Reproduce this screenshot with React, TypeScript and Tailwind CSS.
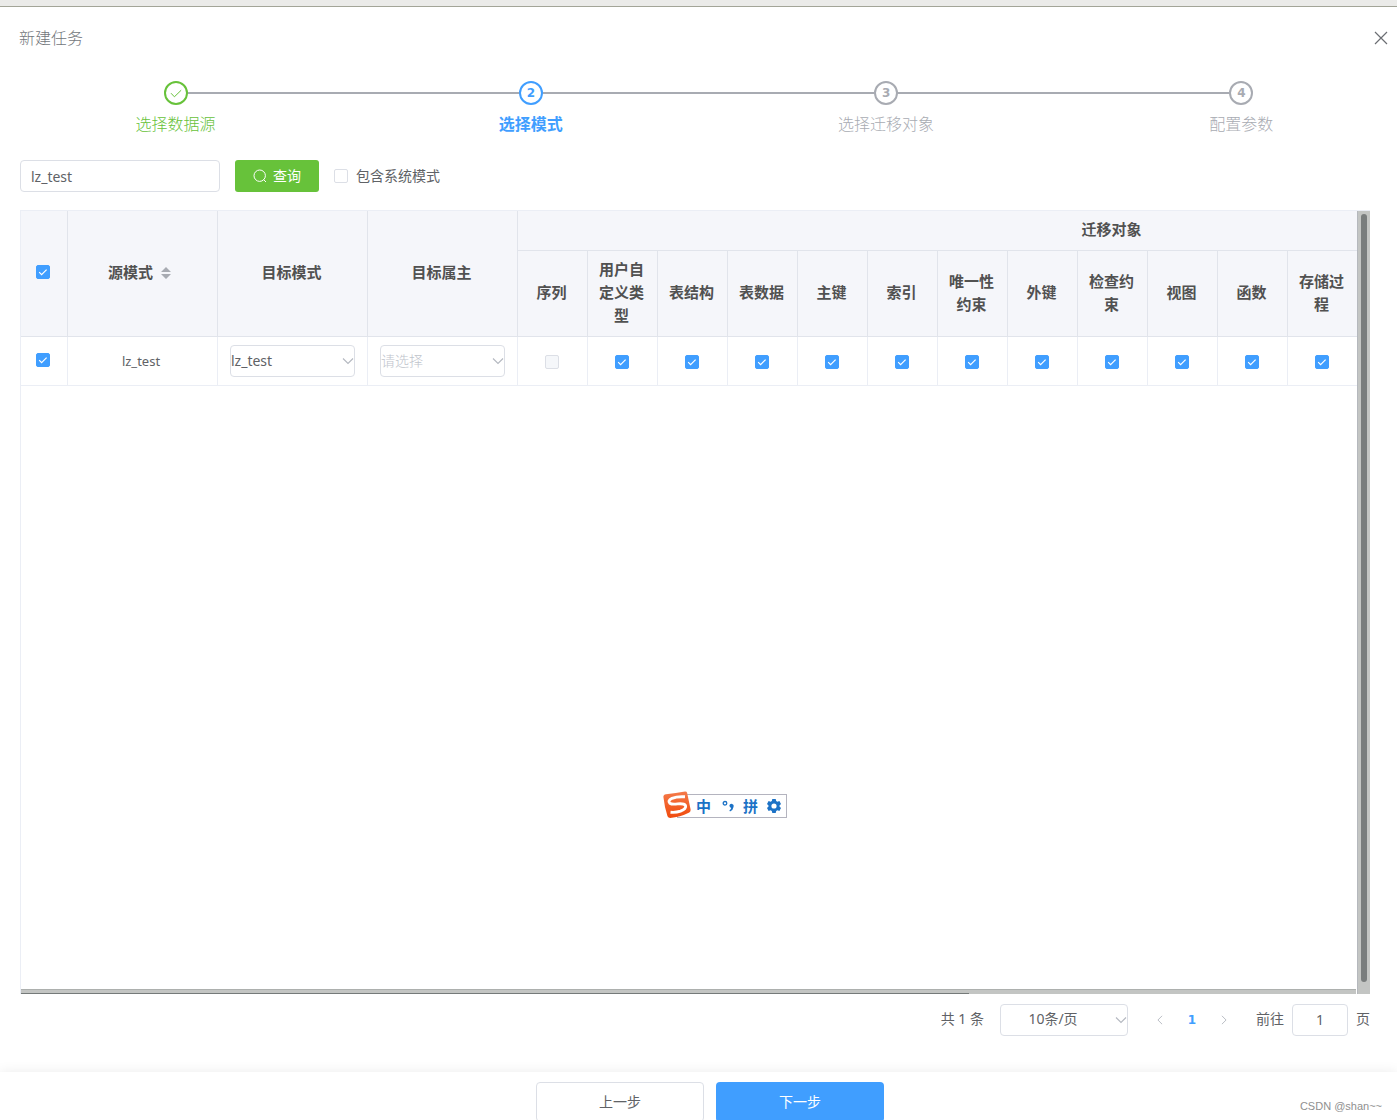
import React, { useState } from "react";

const OBJECT_COLUMNS = [
  "序列",
  "用户自定义类型",
  "表结构",
  "表数据",
  "主键",
  "索引",
  "唯一性约束",
  "外键",
  "检查约束",
  "视图",
  "函数",
  "存储过程",
];
const SPARE_COLUMNS = 5;

function Checkbox({ label, defaultChecked, disabled, id }: { label?: string; defaultChecked?: boolean; disabled?: boolean; id?: string }) {
  return (
    <span className="relative inline-flex size-[14px] align-middle">
      <input
        id={id}
        type="checkbox"
        aria-label={label}
        defaultChecked={defaultChecked}
        disabled={disabled}
        className="peer size-[14px] appearance-none rounded-xs border border-[#dcdfe6] bg-white checked:border-[#409eff] checked:bg-[#409eff] disabled:bg-[#f5f7fa]"
      />
      <svg viewBox="0 0 14 14" className="pointer-events-none absolute inset-0 hidden size-[14px] peer-checked:block" fill="none" stroke="#fff" strokeWidth="1.2">
        <path d="M3.2 7.2l2.4 2.4 5-5" />
      </svg>
    </span>
  );
}

function Chevron({ className }: { className: string }) {
  return (
    <svg viewBox="0 0 12 12" className={className} fill="none" stroke="#b4b8c0" strokeWidth="1.1">
      <path d="M1 3.5l5 5 5-5" />
    </svg>
  );
}

type StepState = "done" | "active" | "wait";

function Step({ index, title, state, last }: { index: number; title: string; state: StepState; last?: boolean }) {
  const color =
    state === "done"
      ? "font-light text-[#67c23a]"
      : state === "active"
        ? "font-bold text-[#409eff]"
        : "font-light text-[#a8abb2]";
  return (
    <li className={`relative flex flex-col items-center ${color}`}>
      {!last && <span className="absolute top-[11px] left-1/2 h-[2px] w-full bg-[#a8abb2]" />}
      <span className="relative z-10 flex size-6 items-center justify-center rounded-full border-2 border-current bg-white font-['DejaVu_Sans'] text-xs font-bold">
        {state === "done" ? (
          <svg viewBox="0 0 14 14" className="size-[14px]" fill="none" stroke="currentColor" strokeWidth="1">
            <path d="M2 7.2l3.4 3.6 6.8-6.6" />
          </svg>
        ) : (
          index
        )}
      </span>
      <span className="text-base leading-[38px]">{title}</span>
    </li>
  );
}

function CellSelect({ label, value, options }: { label: string; value: string; options: string[] }) {
  return (
    <div className="relative mx-3 h-8">
      <select
        aria-label={label}
        defaultValue={value}
        className={`h-8 w-full appearance-none rounded border border-[#dcdfe6] bg-white p-0 text-sm ${value ? "text-[#606266]" : "font-light text-[#c0c4cc]"}`}
      >
        {options.map((o) => (
          <option key={o} value={o === "请选择" ? "" : o}>
            {o}
          </option>
        ))}
      </select>
      <Chevron className="pointer-events-none absolute top-[10px] right-[1px] size-3" />
    </div>
  );
}

const TH = "border-r border-b border-[#e1e4eb] bg-[#f5f6fa] pr-[11px] pb-[2px] pl-[9px] text-center align-middle text-[15px] leading-[23px] font-bold text-[#515151]";
const TD = "border-r border-b border-[#ebeef5] text-center align-middle text-[#606266]";

function SchemaTable() {
  return (
    <div className="flex min-h-0 flex-1 border-t border-l border-[#ebeef5]">
      <div className="flex min-w-0 flex-1 flex-col">
        <div className="min-h-0 flex-1 overflow-hidden">
          <table className="w-[1687px] table-fixed border-separate border-spacing-0">
            <colgroup>
              <col className="w-[47px]" />
              <col className="w-[150px]" />
              <col className="w-[150px]" />
              <col className="w-[150px]" />
              {Array.from({ length: OBJECT_COLUMNS.length + SPARE_COLUMNS }, (_, i) => (
                <col key={i} className="w-[70px]" />
              ))}
            </colgroup>
            <thead>
              <tr className="h-10">
                <th rowSpan={2} className="border-r border-b border-[#e1e4eb] bg-[#f5f6fa] pr-[2px] pb-1 align-middle leading-none">
                  <Checkbox label="全选" defaultChecked />
                </th>
                <th rowSpan={2} className={TH}>
                  <span className="inline-flex items-center gap-2 pr-1">
                    源模式
                    <svg viewBox="0 0 10 12" className="size-[10px] h-3" fill="#a8abb2" aria-hidden="true">
                      <path d="M5 0l5 5H0zM5 12l5-5H0z" />
                    </svg>
                  </span>
                </th>
                <th rowSpan={2} className={TH}>目标模式</th>
                <th rowSpan={2} className={TH}>目标属主</th>
                <th colSpan={OBJECT_COLUMNS.length + SPARE_COLUMNS} className={TH}>迁移对象</th>
              </tr>
              <tr className="h-[86px]">
                {OBJECT_COLUMNS.map((c) => (
                  <th key={c} className={TH}>{c}</th>
                ))}
                <th colSpan={SPARE_COLUMNS} className={TH} />
              </tr>
            </thead>
            <tbody>
              <tr className="h-[49px]">
                <td className="border-r border-b border-[#ebeef5] pr-[2px] pb-1 text-center align-middle leading-none">
                  <Checkbox label="选择 lz_test" defaultChecked />
                </td>
                <td className={`${TD} pr-[3px] text-[13px]`}>lz_test</td>
                <td className={TD}>
                  <CellSelect label="目标模式" value="lz_test" options={["lz_test"]} />
                </td>
                <td className={TD}>
                  <CellSelect label="目标属主" value="" options={["请选择"]} />
                </td>
                {OBJECT_COLUMNS.map((c, i) => (
                  <td key={c} className={`${TD} pr-px leading-none`}>
                    <Checkbox label={c} defaultChecked={i > 0} disabled={i === 0} />
                  </td>
                ))}
                <td colSpan={SPARE_COLUMNS} className={TD} />
              </tr>
            </tbody>
          </table>
        </div>
        <div className="mr-px flex h-[5px] items-end border-t border-[#adb0ae] bg-[#c3c5c3]">
          <div className="h-px w-[71%] bg-[#757a79]" />
        </div>
      </div>
      <div className="flex w-[13px] justify-center border-l border-[#b5b8bd] bg-[#c3c5c3] pt-[3px] pb-3">
        <div className="w-[6px] rounded-full bg-[#797d7d]" />
      </div>
    </div>
  );
}

function Pagination() {
  return (
    <nav aria-label="分页" className="mt-[10px] mb-9 flex h-8 shrink-0 items-center justify-end text-sm text-[#606266]">
      <span className="mr-4 pb-[2px]">共 1 条</span>
      <div className="relative h-8 w-32">
        <select aria-label="每页条数" className="h-8 w-full appearance-none rounded border border-[#dcdfe6] bg-white pr-[22px] pb-[2px] text-center text-sm">
          <option>10条/页</option>
        </select>
        <Chevron className="pointer-events-none absolute top-[10px] right-[1px] size-3" />
      </div>
      <button aria-label="上一页" className="ml-4 flex w-8 justify-center">
        <Chevron className="size-[10px] rotate-90" />
      </button>
      <button className="w-8 font-['DejaVu_Sans'] text-xs font-bold text-[#409eff]">1</button>
      <button aria-label="下一页" className="flex w-8 justify-center">
        <Chevron className="size-[10px] -rotate-90" />
      </button>
      <label htmlFor="page" className="ml-4 pb-[2px]">前往</label>
      <input id="page" defaultValue="1" className="mx-2 h-8 w-14 rounded border border-[#dcdfe6] pb-[2px] text-center" />
      <span className="pb-[2px]">页</span>
    </nav>
  );
}

function InputMethodBar() {
  return (
    <div className="absolute top-[794px] left-[677px] flex h-6 w-[110px] items-center border border-[#b4b4bf] bg-white pl-[18px] text-[15px] leading-none font-bold text-[#1c72c6]">
      <svg viewBox="0 0 28 28" className="absolute -top-[4px] -left-[15px] size-7" aria-hidden="true">
        <defs>
          <linearGradient id="logo" x1="0" y1="0" x2="0" y2="1">
            <stop offset="0" stopColor="#f47a4a" />
            <stop offset="1" stopColor="#f04a0c" />
          </linearGradient>
        </defs>
        <path d="M3 3.2Q13 2 22 .4Q23.600 .2 24.100 1.800L27.600 18.500Q27.900 20.400 26.300 21.500Q17 26.200 7.200 27Q5.200 27 4.500 25.200Q1.500 16 .4 6Q.2 3.600 3 3.200z" fill="url(#logo)" />
        <path d="M22 5.800Q14 5.300 9 7.300Q4.300 9.700 6.800 12.200Q9 13.700 14.500 12.900Q21 12.200 22.500 14.500Q23.800 17.800 17.500 20.200Q13 21.800 7.500 21.300" fill="none" stroke="#fff" strokeWidth="2.900" />
      </svg>
      <span className="w-[26px]">中</span>
      <svg viewBox="0 0 14 14" className="size-[14px]" aria-hidden="true">
        <circle cx="3" cy="4.300" r="1.800" fill="none" stroke="currentColor" strokeWidth="1.300" />
        <path d="M7.400 6.300a2.200 2.200 0 1 1 4.200 1.400Q11.200 11 8 12.500L7.400 11.300Q9 10.300 9.200 9Q7.400 8.300 7.400 6.300z" fill="currentColor" />
      </svg>
      <span className="ml-[7px] w-[24px]">拼</span>
      <svg viewBox="0 0 14 14" className="size-[14px] shrink-0" fill="currentColor" aria-hidden="true">
        <path
          fillRule="evenodd"
          d="M5.300 0h3.400l.5 2 1.200.7 2-.6L14 5l-1.500 1.400v1.200L14 9l-1.600 2.900-2-.6-1.200.7-.5 2H5.300l-.5-2-1.200-.7-2 .6L0 9l1.500-1.400V6.400L0 5l1.600-2.900 2 .6 1.200-.7zM7 4.400a2.600 2.600 0 1 0 0 5.200 2.600 2.600 0 0 0 0-5.200z"
        />
      </svg>
    </div>
  );
}

export default function App() {
  const [query, setQuery] = useState("lz_test");
  return (
    <div className="relative flex h-screen flex-col overflow-hidden bg-white font-['Noto_Sans','Noto_Sans_CJK_SC',sans-serif] text-sm text-[#606266]">
      <div className="h-[7px] shrink-0 border-b border-[#a3a598] bg-[#ebebe9]" />
      <header className="flex h-[62px] shrink-0 items-center justify-between pr-[9px] pl-[19px]">
        <h1 className="text-base font-light text-[#72767b]">新建任务</h1>
        <button aria-label="关闭">
          <svg viewBox="0 0 14 14" className="size-[14px]" fill="none" stroke="#6b6e73" strokeWidth="1.200">
            <path d="M1 1l12 12M13 1L1 13" />
          </svg>
        </button>
      </header>
      <ol className="-mr-[22px] -ml-[2px] grid shrink-0 grid-cols-4 pt-3">
        <Step index={1} title="选择数据源" state="done" />
        <Step index={2} title="选择模式" state="active" />
        <Step index={3} title="选择迁移对象" state="wait" />
        <Step index={4} title="配置参数" state="wait" last />
      </ol>
      <main className="flex min-h-0 flex-1 flex-col pr-[27px] pl-5">
        <form className="mt-[17px] mb-[18px] flex h-8 shrink-0 items-center gap-[15px]" onSubmit={(e) => e.preventDefault()}>
          <input
            aria-label="模式名称"
            value={query}
            onChange={(e) => setQuery(e.target.value)}
            className="h-8 w-[200px] rounded border border-[#dcdfe6] px-[10px] text-sm"
          />
          <button className="flex h-8 w-[84px] items-center justify-center gap-[6px] rounded-[3px] bg-[#67c23a] text-white">
            <svg viewBox="0 0 14 14" className="size-[14px]" fill="none" stroke="currentColor" strokeWidth="1">
              <circle cx="6.700" cy="6.700" r="5.700" />
              <path d="M10.500 10.500l2.500 2.500" />
            </svg>
            查询
          </button>
          <div className="flex items-center gap-2">
            <Checkbox id="system" />
            <label htmlFor="system">包含系统模式</label>
          </div>
        </form>
        <SchemaTable />
        <Pagination />
      </main>
      <footer className="flex h-12 shrink-0 items-start justify-center gap-3 overflow-visible bg-white pt-[10px] pl-[23px] shadow-[0_0_12px_rgba(0,0,0,0.08)]">
        <button className="h-10 w-[168px] shrink-0 rounded border border-[#dcdfe6] bg-white">上一步</button>
        <button className="h-10 w-[168px] shrink-0 rounded bg-[#409eff] text-white">下一步</button>
      </footer>
      <span className="absolute right-[15px] bottom-[6px] font-['Liberation_Sans'] text-[11px] leading-4 text-[#8f8f8f]">CSDN @shan~~</span>
      <InputMethodBar />
    </div>
  );
}
